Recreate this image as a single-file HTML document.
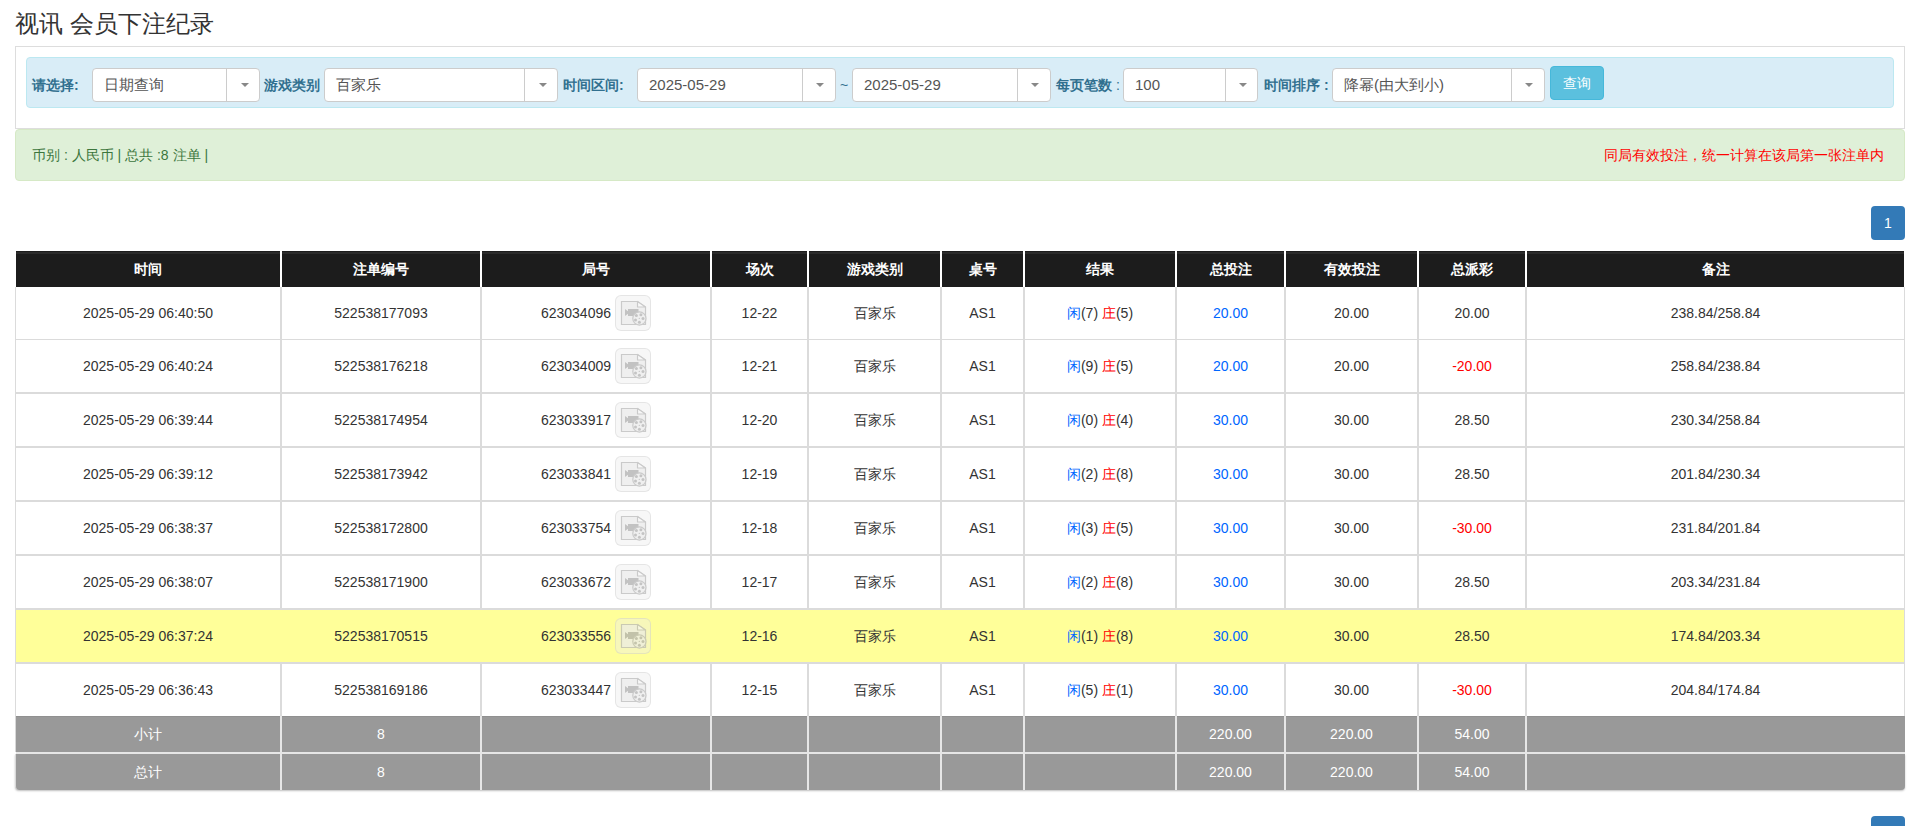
<!DOCTYPE html>
<html><head><meta charset="utf-8"><title>视讯 会员下注纪录</title>
<style>
*{box-sizing:border-box;margin:0;padding:0}
html,body{width:1919px;height:826px;overflow:hidden;background:#fff}
body{position:relative;font-family:"Liberation Sans", sans-serif;font-size:14px;color:#333}
.a{position:absolute}
.t{position:absolute;white-space:nowrap;line-height:20px}
.lbl{position:absolute;white-space:nowrap;font-weight:bold;color:#31708f;font-size:14px;line-height:20px;top:75px}
.sel{position:absolute;top:68px;height:34px;background:#fff;border:1px solid #ccc;border-radius:4px}
.sel .v{position:absolute;left:11px;top:6px;line-height:20px;font-size:15px;color:#555;white-space:nowrap}
.sel .s{position:absolute;top:0;bottom:0;width:1px;background:#ccc}
.sel .c{position:absolute;top:14px;width:0;height:0;border-left:4px solid transparent;border-right:4px solid transparent;border-top:4px solid #888}
.hd{position:absolute;top:251px;height:36px;background:#1c1c1c;color:#fff;font-weight:bold;text-align:center;line-height:36px;font-size:14px}
.hd:before{content:"";position:absolute;left:0;right:0;top:1px;height:2px;background:#2b2b2b}
.hd span{position:relative}
.cell{position:absolute;text-align:center;white-space:nowrap}
.vl{position:absolute;width:2px;background:#dbdbdb}
.hl{position:absolute;left:16px;width:1888px;background:#dbdbdb}
.blue{color:#0066ff}
.red{color:#ff0000}
.ic{width:36px;height:36px;border:1px solid rgba(190,190,190,0.3);border-radius:6px;background:rgba(236,236,236,0.4)}
.ic svg{position:absolute;left:-1px;top:-1px;opacity:.6}
.gr{position:absolute;background:#999;color:#fff;text-align:center;line-height:36px;height:36px}
</style></head><body>

<div class="t" style="left:15px;top:9px;font-size:24px;line-height:30px;color:#333">视讯 会员下注纪录</div>
<div class="a" style="left:15px;top:46px;width:1890px;height:83px;border:1px solid #ddd"></div>
<div class="a" style="left:26px;top:57px;width:1868px;height:51px;background:#d9edf7;border:1px solid #bce8f1;border-radius:4px"></div>
<div class="lbl" style="left:32px">请选择:</div>
<div class="lbl" style="left:264px">游戏类别</div>
<div class="lbl" style="left:563px">时间区间:</div>
<div class="t" style="left:840px;top:75px;color:#31708f;font-size:14px">~</div>
<div class="lbl" style="left:1056px">每页笔数 <span style="font-weight:normal">:</span></div>
<div class="lbl" style="left:1264px">时间排序 :</div>
<div class="sel" style="left:92px;width:168px"><div class="v">日期查询</div><div class="s" style="left:133px"></div><div class="c" style="left:148px"></div></div>
<div class="sel" style="left:324px;width:234px"><div class="v">百家乐</div><div class="s" style="left:199px"></div><div class="c" style="left:214px"></div></div>
<div class="sel" style="left:637px;width:199px"><div class="v">2025-05-29</div><div class="s" style="left:164px"></div><div class="c" style="left:178px"></div></div>
<div class="sel" style="left:852px;width:199px"><div class="v">2025-05-29</div><div class="s" style="left:164px"></div><div class="c" style="left:178px"></div></div>
<div class="sel" style="left:1123px;width:135px"><div class="v">100</div><div class="s" style="left:101px"></div><div class="c" style="left:115px"></div></div>
<div class="sel" style="left:1332px;width:213px"><div class="v">降幂(由大到小)</div><div class="s" style="left:178px"></div><div class="c" style="left:192px"></div></div>
<div class="a" style="left:1550px;top:66px;width:54px;height:34px;background:#5bc0de;border:1px solid #46b8da;border-radius:4px;color:#fff;text-align:center;line-height:32px;font-size:14px">查询</div>
<div class="a" style="left:15px;top:129px;width:1890px;height:52px;background:#dff0d8;border:1px solid #d6e9c6;border-radius:4px"></div>
<div class="t" style="left:32px;top:145px;color:#3c763d;font-size:14px">币别 : 人民币 | 总共 :8 注单 |</div>
<div class="t" style="right:35px;top:145px;color:#ff0000;font-size:14px">同局有效投注，统一计算在该局第一张注单内</div>
<div class="a" style="left:1871px;top:206px;width:34px;height:34px;background:#337ab7;border-radius:4px;color:#fff;text-align:center;line-height:34px;font-size:14px">1</div>
<div class="hd" style="left:16px;width:264px"><span>时间</span></div>
<div class="hd" style="left:282px;width:198px"><span>注单编号</span></div>
<div class="hd" style="left:482px;width:228px"><span>局号</span></div>
<div class="hd" style="left:712px;width:95px"><span>场次</span></div>
<div class="hd" style="left:809px;width:131px"><span>游戏类别</span></div>
<div class="hd" style="left:942px;width:81px"><span>桌号</span></div>
<div class="hd" style="left:1025px;width:150px"><span>结果</span></div>
<div class="hd" style="left:1177px;width:107px"><span>总投注</span></div>
<div class="hd" style="left:1286px;width:131px"><span>有效投注</span></div>
<div class="hd" style="left:1419px;width:106px"><span>总派彩</span></div>
<div class="hd" style="left:1527px;width:377px"><span>备注</span></div>
<div class="hl" style="top:339px;height:1px"></div>
<div class="hl" style="top:392px;height:2px"></div>
<div class="hl" style="top:446px;height:2px"></div>
<div class="hl" style="top:500px;height:2px"></div>
<div class="hl" style="top:554px;height:2px"></div>
<div class="hl" style="top:608px;height:2px"></div>
<div class="hl" style="top:662px;height:2px"></div>
<div class="a" style="left:15px;top:287px;width:1px;height:429px;background:#dbdbdb"></div>
<div class="a" style="left:1904px;top:287px;width:1px;height:429px;background:#dbdbdb"></div>
<div class="vl" style="left:280px;top:287px;height:429px"></div>
<div class="vl" style="left:480px;top:287px;height:429px"></div>
<div class="vl" style="left:710px;top:287px;height:429px"></div>
<div class="vl" style="left:807px;top:287px;height:429px"></div>
<div class="vl" style="left:940px;top:287px;height:429px"></div>
<div class="vl" style="left:1023px;top:287px;height:429px"></div>
<div class="vl" style="left:1175px;top:287px;height:429px"></div>
<div class="vl" style="left:1284px;top:287px;height:429px"></div>
<div class="vl" style="left:1417px;top:287px;height:429px"></div>
<div class="vl" style="left:1525px;top:287px;height:429px"></div>
<div class="cell" style="left:16px;top:303px;width:264px;line-height:20px">2025-05-29 06:40:50</div>
<div class="cell" style="left:282px;top:303px;width:198px;line-height:20px">522538177093</div>
<div class="t" style="left:500px;width:111px;text-align:right;top:303px">623034096</div>
<div class="ic" style="position:absolute;left:615px;top:295px"><svg width="36" height="36" viewBox="0 0 36 36"><path d="M6.5 6.5H22.5L30.5 12V29.5H6.5Z" fill="#ebebeb" stroke="#adadad" stroke-width="1.2"/><path d="M22.5 6.5V12H30.5Z" fill="#fafafa" stroke="#adadad" stroke-width="1.2" stroke-linejoin="round"/><path d="M10 14L13 16.2V14H23.5V21H13V18.8L10 21Z" fill="#a0a0a0"/><circle cx="24.4" cy="23.5" r="6.6" fill="#ebebeb" stroke="#adadad" stroke-width="1.2"/><circle cx="21.4" cy="20.6" r="1.5" fill="#a3a3a3"/><circle cx="25.9" cy="19.8" r="1.5" fill="#a3a3a3"/><circle cx="28" cy="23.6" r="1.5" fill="#a3a3a3"/><circle cx="24.4" cy="27.2" r="1.5" fill="#a3a3a3"/><circle cx="20.5" cy="25.1" r="1.5" fill="#a3a3a3"/><circle cx="24.3" cy="23.4" r="0.6" fill="#a3a3a3"/></svg></div>
<div class="cell" style="left:712px;top:303px;width:95px;line-height:20px">12-22</div>
<div class="cell" style="left:809px;top:303px;width:131px;line-height:20px">百家乐</div>
<div class="cell" style="left:942px;top:303px;width:81px;line-height:20px">AS1</div>
<div class="cell" style="left:1025px;top:303px;width:150px;line-height:20px"><span class="blue">闲</span>(7) <span class="red">庄</span>(5)</div>
<div class="cell" style="left:1177px;top:303px;width:107px;line-height:20px"><span class="blue">20.00</span></div>
<div class="cell" style="left:1286px;top:303px;width:131px;line-height:20px">20.00</div>
<div class="cell" style="left:1419px;top:303px;width:106px;line-height:20px">20.00</div>
<div class="cell" style="left:1527px;top:303px;width:377px;line-height:20px">238.84/258.84</div>
<div class="cell" style="left:16px;top:356px;width:264px;line-height:20px">2025-05-29 06:40:24</div>
<div class="cell" style="left:282px;top:356px;width:198px;line-height:20px">522538176218</div>
<div class="t" style="left:500px;width:111px;text-align:right;top:356px">623034009</div>
<div class="ic" style="position:absolute;left:615px;top:348px"><svg width="36" height="36" viewBox="0 0 36 36"><path d="M6.5 6.5H22.5L30.5 12V29.5H6.5Z" fill="#ebebeb" stroke="#adadad" stroke-width="1.2"/><path d="M22.5 6.5V12H30.5Z" fill="#fafafa" stroke="#adadad" stroke-width="1.2" stroke-linejoin="round"/><path d="M10 14L13 16.2V14H23.5V21H13V18.8L10 21Z" fill="#a0a0a0"/><circle cx="24.4" cy="23.5" r="6.6" fill="#ebebeb" stroke="#adadad" stroke-width="1.2"/><circle cx="21.4" cy="20.6" r="1.5" fill="#a3a3a3"/><circle cx="25.9" cy="19.8" r="1.5" fill="#a3a3a3"/><circle cx="28" cy="23.6" r="1.5" fill="#a3a3a3"/><circle cx="24.4" cy="27.2" r="1.5" fill="#a3a3a3"/><circle cx="20.5" cy="25.1" r="1.5" fill="#a3a3a3"/><circle cx="24.3" cy="23.4" r="0.6" fill="#a3a3a3"/></svg></div>
<div class="cell" style="left:712px;top:356px;width:95px;line-height:20px">12-21</div>
<div class="cell" style="left:809px;top:356px;width:131px;line-height:20px">百家乐</div>
<div class="cell" style="left:942px;top:356px;width:81px;line-height:20px">AS1</div>
<div class="cell" style="left:1025px;top:356px;width:150px;line-height:20px"><span class="blue">闲</span>(9) <span class="red">庄</span>(5)</div>
<div class="cell" style="left:1177px;top:356px;width:107px;line-height:20px"><span class="blue">20.00</span></div>
<div class="cell" style="left:1286px;top:356px;width:131px;line-height:20px">20.00</div>
<div class="cell" style="left:1419px;top:356px;width:106px;line-height:20px"><span class="red">-20.00</span></div>
<div class="cell" style="left:1527px;top:356px;width:377px;line-height:20px">258.84/238.84</div>
<div class="cell" style="left:16px;top:410px;width:264px;line-height:20px">2025-05-29 06:39:44</div>
<div class="cell" style="left:282px;top:410px;width:198px;line-height:20px">522538174954</div>
<div class="t" style="left:500px;width:111px;text-align:right;top:410px">623033917</div>
<div class="ic" style="position:absolute;left:615px;top:402px"><svg width="36" height="36" viewBox="0 0 36 36"><path d="M6.5 6.5H22.5L30.5 12V29.5H6.5Z" fill="#ebebeb" stroke="#adadad" stroke-width="1.2"/><path d="M22.5 6.5V12H30.5Z" fill="#fafafa" stroke="#adadad" stroke-width="1.2" stroke-linejoin="round"/><path d="M10 14L13 16.2V14H23.5V21H13V18.8L10 21Z" fill="#a0a0a0"/><circle cx="24.4" cy="23.5" r="6.6" fill="#ebebeb" stroke="#adadad" stroke-width="1.2"/><circle cx="21.4" cy="20.6" r="1.5" fill="#a3a3a3"/><circle cx="25.9" cy="19.8" r="1.5" fill="#a3a3a3"/><circle cx="28" cy="23.6" r="1.5" fill="#a3a3a3"/><circle cx="24.4" cy="27.2" r="1.5" fill="#a3a3a3"/><circle cx="20.5" cy="25.1" r="1.5" fill="#a3a3a3"/><circle cx="24.3" cy="23.4" r="0.6" fill="#a3a3a3"/></svg></div>
<div class="cell" style="left:712px;top:410px;width:95px;line-height:20px">12-20</div>
<div class="cell" style="left:809px;top:410px;width:131px;line-height:20px">百家乐</div>
<div class="cell" style="left:942px;top:410px;width:81px;line-height:20px">AS1</div>
<div class="cell" style="left:1025px;top:410px;width:150px;line-height:20px"><span class="blue">闲</span>(0) <span class="red">庄</span>(4)</div>
<div class="cell" style="left:1177px;top:410px;width:107px;line-height:20px"><span class="blue">30.00</span></div>
<div class="cell" style="left:1286px;top:410px;width:131px;line-height:20px">30.00</div>
<div class="cell" style="left:1419px;top:410px;width:106px;line-height:20px">28.50</div>
<div class="cell" style="left:1527px;top:410px;width:377px;line-height:20px">230.34/258.84</div>
<div class="cell" style="left:16px;top:464px;width:264px;line-height:20px">2025-05-29 06:39:12</div>
<div class="cell" style="left:282px;top:464px;width:198px;line-height:20px">522538173942</div>
<div class="t" style="left:500px;width:111px;text-align:right;top:464px">623033841</div>
<div class="ic" style="position:absolute;left:615px;top:456px"><svg width="36" height="36" viewBox="0 0 36 36"><path d="M6.5 6.5H22.5L30.5 12V29.5H6.5Z" fill="#ebebeb" stroke="#adadad" stroke-width="1.2"/><path d="M22.5 6.5V12H30.5Z" fill="#fafafa" stroke="#adadad" stroke-width="1.2" stroke-linejoin="round"/><path d="M10 14L13 16.2V14H23.5V21H13V18.8L10 21Z" fill="#a0a0a0"/><circle cx="24.4" cy="23.5" r="6.6" fill="#ebebeb" stroke="#adadad" stroke-width="1.2"/><circle cx="21.4" cy="20.6" r="1.5" fill="#a3a3a3"/><circle cx="25.9" cy="19.8" r="1.5" fill="#a3a3a3"/><circle cx="28" cy="23.6" r="1.5" fill="#a3a3a3"/><circle cx="24.4" cy="27.2" r="1.5" fill="#a3a3a3"/><circle cx="20.5" cy="25.1" r="1.5" fill="#a3a3a3"/><circle cx="24.3" cy="23.4" r="0.6" fill="#a3a3a3"/></svg></div>
<div class="cell" style="left:712px;top:464px;width:95px;line-height:20px">12-19</div>
<div class="cell" style="left:809px;top:464px;width:131px;line-height:20px">百家乐</div>
<div class="cell" style="left:942px;top:464px;width:81px;line-height:20px">AS1</div>
<div class="cell" style="left:1025px;top:464px;width:150px;line-height:20px"><span class="blue">闲</span>(2) <span class="red">庄</span>(8)</div>
<div class="cell" style="left:1177px;top:464px;width:107px;line-height:20px"><span class="blue">30.00</span></div>
<div class="cell" style="left:1286px;top:464px;width:131px;line-height:20px">30.00</div>
<div class="cell" style="left:1419px;top:464px;width:106px;line-height:20px">28.50</div>
<div class="cell" style="left:1527px;top:464px;width:377px;line-height:20px">201.84/230.34</div>
<div class="cell" style="left:16px;top:518px;width:264px;line-height:20px">2025-05-29 06:38:37</div>
<div class="cell" style="left:282px;top:518px;width:198px;line-height:20px">522538172800</div>
<div class="t" style="left:500px;width:111px;text-align:right;top:518px">623033754</div>
<div class="ic" style="position:absolute;left:615px;top:510px"><svg width="36" height="36" viewBox="0 0 36 36"><path d="M6.5 6.5H22.5L30.5 12V29.5H6.5Z" fill="#ebebeb" stroke="#adadad" stroke-width="1.2"/><path d="M22.5 6.5V12H30.5Z" fill="#fafafa" stroke="#adadad" stroke-width="1.2" stroke-linejoin="round"/><path d="M10 14L13 16.2V14H23.5V21H13V18.8L10 21Z" fill="#a0a0a0"/><circle cx="24.4" cy="23.5" r="6.6" fill="#ebebeb" stroke="#adadad" stroke-width="1.2"/><circle cx="21.4" cy="20.6" r="1.5" fill="#a3a3a3"/><circle cx="25.9" cy="19.8" r="1.5" fill="#a3a3a3"/><circle cx="28" cy="23.6" r="1.5" fill="#a3a3a3"/><circle cx="24.4" cy="27.2" r="1.5" fill="#a3a3a3"/><circle cx="20.5" cy="25.1" r="1.5" fill="#a3a3a3"/><circle cx="24.3" cy="23.4" r="0.6" fill="#a3a3a3"/></svg></div>
<div class="cell" style="left:712px;top:518px;width:95px;line-height:20px">12-18</div>
<div class="cell" style="left:809px;top:518px;width:131px;line-height:20px">百家乐</div>
<div class="cell" style="left:942px;top:518px;width:81px;line-height:20px">AS1</div>
<div class="cell" style="left:1025px;top:518px;width:150px;line-height:20px"><span class="blue">闲</span>(3) <span class="red">庄</span>(5)</div>
<div class="cell" style="left:1177px;top:518px;width:107px;line-height:20px"><span class="blue">30.00</span></div>
<div class="cell" style="left:1286px;top:518px;width:131px;line-height:20px">30.00</div>
<div class="cell" style="left:1419px;top:518px;width:106px;line-height:20px"><span class="red">-30.00</span></div>
<div class="cell" style="left:1527px;top:518px;width:377px;line-height:20px">231.84/201.84</div>
<div class="cell" style="left:16px;top:572px;width:264px;line-height:20px">2025-05-29 06:38:07</div>
<div class="cell" style="left:282px;top:572px;width:198px;line-height:20px">522538171900</div>
<div class="t" style="left:500px;width:111px;text-align:right;top:572px">623033672</div>
<div class="ic" style="position:absolute;left:615px;top:564px"><svg width="36" height="36" viewBox="0 0 36 36"><path d="M6.5 6.5H22.5L30.5 12V29.5H6.5Z" fill="#ebebeb" stroke="#adadad" stroke-width="1.2"/><path d="M22.5 6.5V12H30.5Z" fill="#fafafa" stroke="#adadad" stroke-width="1.2" stroke-linejoin="round"/><path d="M10 14L13 16.2V14H23.5V21H13V18.8L10 21Z" fill="#a0a0a0"/><circle cx="24.4" cy="23.5" r="6.6" fill="#ebebeb" stroke="#adadad" stroke-width="1.2"/><circle cx="21.4" cy="20.6" r="1.5" fill="#a3a3a3"/><circle cx="25.9" cy="19.8" r="1.5" fill="#a3a3a3"/><circle cx="28" cy="23.6" r="1.5" fill="#a3a3a3"/><circle cx="24.4" cy="27.2" r="1.5" fill="#a3a3a3"/><circle cx="20.5" cy="25.1" r="1.5" fill="#a3a3a3"/><circle cx="24.3" cy="23.4" r="0.6" fill="#a3a3a3"/></svg></div>
<div class="cell" style="left:712px;top:572px;width:95px;line-height:20px">12-17</div>
<div class="cell" style="left:809px;top:572px;width:131px;line-height:20px">百家乐</div>
<div class="cell" style="left:942px;top:572px;width:81px;line-height:20px">AS1</div>
<div class="cell" style="left:1025px;top:572px;width:150px;line-height:20px"><span class="blue">闲</span>(2) <span class="red">庄</span>(8)</div>
<div class="cell" style="left:1177px;top:572px;width:107px;line-height:20px"><span class="blue">30.00</span></div>
<div class="cell" style="left:1286px;top:572px;width:131px;line-height:20px">30.00</div>
<div class="cell" style="left:1419px;top:572px;width:106px;line-height:20px">28.50</div>
<div class="cell" style="left:1527px;top:572px;width:377px;line-height:20px">203.34/231.84</div>
<div class="a" style="left:16px;top:610px;width:1888px;height:52px;background:#ffff99"></div>
<div class="cell" style="left:16px;top:626px;width:264px;line-height:20px">2025-05-29 06:37:24</div>
<div class="cell" style="left:282px;top:626px;width:198px;line-height:20px">522538170515</div>
<div class="t" style="left:500px;width:111px;text-align:right;top:626px">623033556</div>
<div class="ic" style="position:absolute;left:615px;top:618px"><svg width="36" height="36" viewBox="0 0 36 36"><path d="M6.5 6.5H22.5L30.5 12V29.5H6.5Z" fill="#ebebeb" stroke="#adadad" stroke-width="1.2"/><path d="M22.5 6.5V12H30.5Z" fill="#fafafa" stroke="#adadad" stroke-width="1.2" stroke-linejoin="round"/><path d="M10 14L13 16.2V14H23.5V21H13V18.8L10 21Z" fill="#a0a0a0"/><circle cx="24.4" cy="23.5" r="6.6" fill="#ebebeb" stroke="#adadad" stroke-width="1.2"/><circle cx="21.4" cy="20.6" r="1.5" fill="#a3a3a3"/><circle cx="25.9" cy="19.8" r="1.5" fill="#a3a3a3"/><circle cx="28" cy="23.6" r="1.5" fill="#a3a3a3"/><circle cx="24.4" cy="27.2" r="1.5" fill="#a3a3a3"/><circle cx="20.5" cy="25.1" r="1.5" fill="#a3a3a3"/><circle cx="24.3" cy="23.4" r="0.6" fill="#a3a3a3"/></svg></div>
<div class="cell" style="left:712px;top:626px;width:95px;line-height:20px">12-16</div>
<div class="cell" style="left:809px;top:626px;width:131px;line-height:20px">百家乐</div>
<div class="cell" style="left:942px;top:626px;width:81px;line-height:20px">AS1</div>
<div class="cell" style="left:1025px;top:626px;width:150px;line-height:20px"><span class="blue">闲</span>(1) <span class="red">庄</span>(8)</div>
<div class="cell" style="left:1177px;top:626px;width:107px;line-height:20px"><span class="blue">30.00</span></div>
<div class="cell" style="left:1286px;top:626px;width:131px;line-height:20px">30.00</div>
<div class="cell" style="left:1419px;top:626px;width:106px;line-height:20px">28.50</div>
<div class="cell" style="left:1527px;top:626px;width:377px;line-height:20px">174.84/203.34</div>
<div class="cell" style="left:16px;top:680px;width:264px;line-height:20px">2025-05-29 06:36:43</div>
<div class="cell" style="left:282px;top:680px;width:198px;line-height:20px">522538169186</div>
<div class="t" style="left:500px;width:111px;text-align:right;top:680px">623033447</div>
<div class="ic" style="position:absolute;left:615px;top:672px"><svg width="36" height="36" viewBox="0 0 36 36"><path d="M6.5 6.5H22.5L30.5 12V29.5H6.5Z" fill="#ebebeb" stroke="#adadad" stroke-width="1.2"/><path d="M22.5 6.5V12H30.5Z" fill="#fafafa" stroke="#adadad" stroke-width="1.2" stroke-linejoin="round"/><path d="M10 14L13 16.2V14H23.5V21H13V18.8L10 21Z" fill="#a0a0a0"/><circle cx="24.4" cy="23.5" r="6.6" fill="#ebebeb" stroke="#adadad" stroke-width="1.2"/><circle cx="21.4" cy="20.6" r="1.5" fill="#a3a3a3"/><circle cx="25.9" cy="19.8" r="1.5" fill="#a3a3a3"/><circle cx="28" cy="23.6" r="1.5" fill="#a3a3a3"/><circle cx="24.4" cy="27.2" r="1.5" fill="#a3a3a3"/><circle cx="20.5" cy="25.1" r="1.5" fill="#a3a3a3"/><circle cx="24.3" cy="23.4" r="0.6" fill="#a3a3a3"/></svg></div>
<div class="cell" style="left:712px;top:680px;width:95px;line-height:20px">12-15</div>
<div class="cell" style="left:809px;top:680px;width:131px;line-height:20px">百家乐</div>
<div class="cell" style="left:942px;top:680px;width:81px;line-height:20px">AS1</div>
<div class="cell" style="left:1025px;top:680px;width:150px;line-height:20px"><span class="blue">闲</span>(5) <span class="red">庄</span>(1)</div>
<div class="cell" style="left:1177px;top:680px;width:107px;line-height:20px"><span class="blue">30.00</span></div>
<div class="cell" style="left:1286px;top:680px;width:131px;line-height:20px">30.00</div>
<div class="cell" style="left:1419px;top:680px;width:106px;line-height:20px"><span class="red">-30.00</span></div>
<div class="cell" style="left:1527px;top:680px;width:377px;line-height:20px">204.84/174.84</div>
<div class="a" style="left:15px;top:716px;width:1890px;height:36px;background:#999;border-left:1px solid #d8d8d8"></div>
<div class="cell" style="left:16px;top:724px;width:264px;line-height:20px;color:#fff">小计</div>
<div class="cell" style="left:282px;top:724px;width:198px;line-height:20px;color:#fff">8</div>
<div class="cell" style="left:1177px;top:724px;width:107px;line-height:20px;color:#fff">220.00</div>
<div class="cell" style="left:1286px;top:724px;width:131px;line-height:20px;color:#fff">220.00</div>
<div class="cell" style="left:1419px;top:724px;width:106px;line-height:20px;color:#fff">54.00</div>
<div class="a" style="left:15px;top:754px;width:1890px;height:36px;background:#999;border-left:1px solid #d8d8d8;border-radius:0 0 4px 4px;box-shadow:0 1px 2px rgba(0,0,0,.25)"></div>
<div class="cell" style="left:16px;top:762px;width:264px;line-height:20px;color:#fff">总计</div>
<div class="cell" style="left:282px;top:762px;width:198px;line-height:20px;color:#fff">8</div>
<div class="cell" style="left:1177px;top:762px;width:107px;line-height:20px;color:#fff">220.00</div>
<div class="cell" style="left:1286px;top:762px;width:131px;line-height:20px;color:#fff">220.00</div>
<div class="cell" style="left:1419px;top:762px;width:106px;line-height:20px;color:#fff">54.00</div>
<div class="a" style="left:16px;top:752px;width:1889px;height:2px;background:#e6e6e6"></div>
<div class="a" style="left:16px;top:716px;width:1888px;height:1px;background:#909090"></div>
<div class="a" style="left:280px;top:716px;width:2px;height:74px;background:#e6e6e6"></div>
<div class="a" style="left:480px;top:716px;width:2px;height:74px;background:#e6e6e6"></div>
<div class="a" style="left:710px;top:716px;width:2px;height:74px;background:#e6e6e6"></div>
<div class="a" style="left:807px;top:716px;width:2px;height:74px;background:#e6e6e6"></div>
<div class="a" style="left:940px;top:716px;width:2px;height:74px;background:#e6e6e6"></div>
<div class="a" style="left:1023px;top:716px;width:2px;height:74px;background:#e6e6e6"></div>
<div class="a" style="left:1175px;top:716px;width:2px;height:74px;background:#e6e6e6"></div>
<div class="a" style="left:1284px;top:716px;width:2px;height:74px;background:#e6e6e6"></div>
<div class="a" style="left:1417px;top:716px;width:2px;height:74px;background:#e6e6e6"></div>
<div class="a" style="left:1525px;top:716px;width:2px;height:74px;background:#e6e6e6"></div>
<div class="a" style="left:1871px;top:816px;width:34px;height:34px;background:#337ab7;border-radius:4px"></div>
</body></html>
